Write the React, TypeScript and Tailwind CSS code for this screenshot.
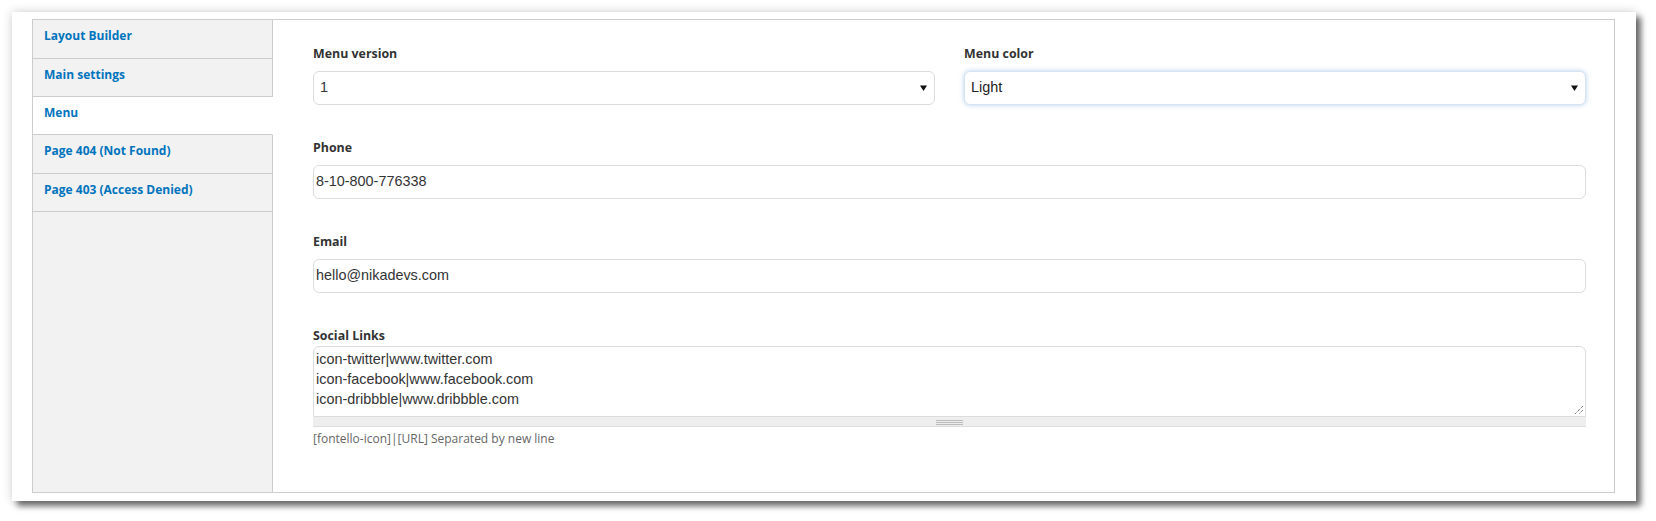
import React from "react";

const tabs = [
  { label: "Layout Builder", active: false, h: "h-[39px]" },
  { label: "Main settings", active: false, h: "h-[38px]" },
  { label: "Menu", active: true, h: "h-[38px]" },
  { label: "Page 404 (Not Found)", active: false, h: "h-[39px]" },
  { label: "Page 403 (Access Denied)", active: false, h: "h-[38px]" },
];

const uiFont = { fontFamily: '"Open Sans", "DejaVu Sans", sans-serif' };
const inFont = { fontFamily: '"Liberation Sans", Arial, sans-serif' };

function Arrow() {
  return (
    <svg width="7" height="6" viewBox="0 0 7 6" className="shrink-0">
      <path d="M0 0.5 H7 L3.5 6 Z" fill="#111" />
    </svg>
  );
}

function Label({ children, mb = "mb-[8px]" }: { children: React.ReactNode; mb?: string }) {
  return (
    <div className={`h-[18px] leading-[18px] text-[12.4px] font-bold text-[#333] ${mb}`} style={uiFont}>
      {children}
    </div>
  );
}

export default function App() {
  return (
    <div className="w-[1656px] h-[521px] bg-white pt-[12px] pl-[12px]">
      <div className="w-[1624px] h-[489px] bg-white pt-[7px] pl-[20px] shadow-[0_0_10px_rgba(0,0,0,0.18),5px_5px_6px_rgba(0,0,0,0.55)]">
        <div className="w-[1583px] h-[474px] border border-[#cccccc] flex">
          <div className="w-[240px] flex flex-col bg-[#f2f2f2]">
            {tabs.map((t) => (
              <div
                key={t.label}
                className={`${t.h} shrink-0 border-b border-[#cccccc] pl-[11px] pt-[7px] text-[12px] font-bold text-[#0074bd] leading-[18px] ${
                  t.active ? "bg-white border-r border-r-white" : "border-r border-r-[#cccccc]"
                }`}
                style={uiFont}
              >
                {t.label}
              </div>
            ))}
            <div className="flex-1 border-r border-[#cccccc]" />
          </div>
          <div className="flex-1 pl-[40px] pr-[28px] pt-[25px]">
            <div className="flex gap-[29px]">
              <div className="flex-1">
                <Label>Menu version</Label>
                <div className="h-[34px] rounded-[6px] border border-[#dcdcdc] bg-white flex items-center justify-between pl-[6px] pr-[7px] text-[14.4px] text-[#333]" style={inFont}>
                  <span>1</span>
                  <Arrow />
                </div>
              </div>
              <div className="flex-1">
                <Label>Menu color</Label>
                <div className="h-[34px] rounded-[6px] border border-[#d6e4f2] bg-white flex items-center justify-between pl-[6px] pr-[7px] text-[14.4px] text-[#222] shadow-[0_0_5px_rgba(90,150,220,0.45)]" style={inFont}>
                  <span>Light</span>
                  <Arrow />
                </div>
              </div>
            </div>

            <div className="mt-[34px]">
              <Label>Phone</Label>
              <div className="h-[34px] rounded-[6px] border border-[#dcdcdc] bg-white flex items-center pl-[2px] text-[14.4px] text-[#333]" style={inFont}>
                8-10-800-776338
              </div>
            </div>

            <div className="mt-[34px]">
              <Label>Email</Label>
              <div className="h-[34px] rounded-[6px] border border-[#dcdcdc] bg-white flex items-center pl-[2px] text-[14.4px] text-[#333]" style={inFont}>
                hello@nikadevs.com
              </div>
            </div>

            <div className="mt-[34px]">
              <Label mb="mb-[1px]">Social Links</Label>
              <div className="relative h-[71px] rounded-t-[6px] border border-[#dcdcdc] bg-white pl-[2px] pt-[2px] text-[14.4px] leading-[20px] text-[#333]" style={inFont}>
                <div>icon-twitter|www.twitter.com</div>
                <div>icon-facebook|www.facebook.com</div>
                <div>icon-dribbble|www.dribbble.com</div>
                <svg width="10" height="10" viewBox="0 0 10 10" className="absolute right-[1px] bottom-[1px]">
                  <path d="M9 1 L1 9 M9 5 L5 9" stroke="#444" strokeWidth="1" strokeDasharray="1 1" />
                </svg>
              </div>
              <div className="h-[10px] bg-[#eeeeee] border-b border-[#dddddd] flex items-center justify-center">
                <div className="w-[27px] flex flex-col gap-[1px] mt-[2px]">
                  <div className="h-[1px] bg-[#bbbbbb]" />
                  <div className="h-[1px] bg-[#bbbbbb]" />
                  <div className="h-[1px] bg-[#bbbbbb]" />
                </div>
              </div>
              <div className="mt-[4px] text-[12px] leading-[16px] text-[#666]" style={uiFont}>
                [fontello-icon]|[URL] Separated by new line
              </div>
            </div>
          </div>
        </div>
      </div>
    </div>
  );
}
